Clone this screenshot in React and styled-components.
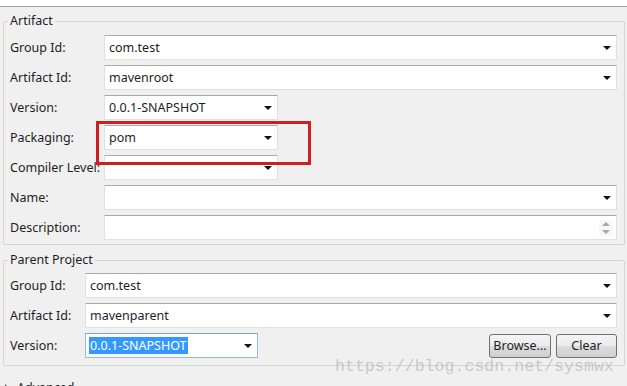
import React from 'react'
import styled, { createGlobalStyle } from 'styled-components'

const GlobalStyle = createGlobalStyle`
  html, body {
    margin: 0;
    padding: 0;
    background: #f0f0f0;
    overflow: hidden;
  }
  body {
    font-family: "Noto Sans", "Liberation Sans", sans-serif;
    font-size: 12.5px;
    color: #1e1e1e;
  }
`

const Page = styled.div`
  position: relative;
  width: 627px;
  height: 386px;
  overflow: hidden;
`

const TopStrip = styled.div`
  height: 6px;
  background: #fff;
  border-bottom: 1px solid #a0a0a0;
`

const Body = styled.div`
  padding: 7px 2px 0 3px;
  display: flex;
  flex-direction: column;
  gap: 8px;
`

const Group = styled.fieldset`
  margin: 0;
  padding: ${p => p.$top}px 7px ${p => p.$bottom}px 6px;
  border: 1px solid #d5d5d5;
  border-radius: 2px;
  min-width: 0;
  display: flex;
  flex-direction: column;
  gap: ${p => p.$gap}px;
`

const Legend = styled.legend`
  padding: 0 2px;
  margin-left: -2px;
  line-height: 14px;
  color: #1e1e1e;
`

const Row = styled.div`
  display: grid;
  grid-template-columns: ${p => p.$label}px 1fr;
  align-items: center;
  height: 25px;
`

const Label = styled.span`
  white-space: nowrap;
  line-height: 25px;
`

const FieldLine = styled.div`
  display: flex;
  align-items: center;
  gap: 5px;
  min-width: 0;
`

const Box = styled.div`
  position: relative;
  box-sizing: border-box;
  height: 25px;
  width: ${p => (p.$width ? `${p.$width}px` : '100%')};
  background: #fff;
  border: 1px solid ${p => (p.$focus ? '#8fbce9' : '#e1e1e1')};
  border-top-color: ${p => (p.$focus ? '#6fa8e0' : '#a9a9a9')};
  display: flex;
  align-items: center;
  padding: 0 3px;
  white-space: nowrap;
`

const Value = styled.span`
  line-height: 17px;
  padding: 0 1px;
  background: ${p => (p.$selected ? '#3399ff' : 'transparent')};
  color: ${p => (p.$selected ? '#fff' : '#1e1e1e')};
`

const Arrow = styled.span`
  margin-left: auto;
  margin-right: 2px;
  width: 0;
  height: 0;
  border-left: 4px solid transparent;
  border-right: 4px solid transparent;
  border-top: 4px solid #111;
`

const Spinner = styled.div`
  margin-left: auto;
  display: flex;
  flex-direction: column;
  gap: 4px;
  padding: 2px 3px;
  background: #f7f7f7;
  border-radius: 2px;
`

const SpinArrow = styled.span`
  width: 0;
  height: 0;
  border-left: 4px solid transparent;
  border-right: 4px solid transparent;
  ${p => (p.$up ? 'border-bottom: 4px solid #a8a8a8;' : 'border-top: 4px solid #a8a8a8;')}
`

const Spacer = styled.div`
  flex: 1;
`

const Button = styled.button`
  box-sizing: border-box;
  height: 24px;
  width: ${p => p.$width}px;
  padding: 0;
  font: inherit;
  color: #1e1e1e;
  border: 1px solid #707070;
  border-radius: 3px;
  background: linear-gradient(#f4f4f4, #ebebeb 50%, #dddddd 51%, #cfcfcf);
`

const Highlight = styled.div`
  position: absolute;
  left: 96px;
  top: 121px;
  width: 215px;
  height: 44px;
  box-sizing: border-box;
  border: 3px solid #cc1f1f;
  pointer-events: none;
`

const Watermark = styled.div`
  position: absolute;
  left: 335px;
  top: 357px;
  line-height: 20px;
  font-family: "Liberation Mono", "DejaVu Sans Mono", monospace;
  font-size: 16.6px;
  color: rgba(175, 175, 175, 0.6);
  pointer-events: none;
`

const Advanced = styled.div`
  display: flex;
  align-items: center;
  gap: 8px;
  padding: 6px 0 0 2px;
  line-height: 16px;
`

const Twisty = styled.span`
  width: 0;
  height: 0;
  border-top: 4px solid transparent;
  border-bottom: 4px solid transparent;
  border-left: 4px solid #555;
`

const Combo = ({ value, width, focus, selected }) => (
  <Box $width={width} $focus={focus}>
    <Value $selected={selected}>{value}</Value>
    <Arrow />
  </Box>
)

const artifactRows = [
  { label: 'Group Id:', value: 'com.test', kind: 'combo' },
  { label: 'Artifact Id:', value: 'mavenroot', kind: 'combo' },
  { label: 'Version:', value: '0.0.1-SNAPSHOT', kind: 'combo', width: 174 },
  { label: 'Packaging:', value: 'pom', kind: 'combo', width: 174 },
  { label: 'Compiler Level:', value: '', kind: 'combo', width: 174 },
  { label: 'Name:', value: '', kind: 'combo' },
  { label: 'Description:', value: '', kind: 'spin' },
]

export default function App() {
  return (
    <Page>
      <GlobalStyle />
      <TopStrip />
      <Body>
        <Group $top={7} $bottom={4} $gap={5}>
          <Legend>Artifact</Legend>
          {artifactRows.map(r => (
            <Row key={r.label} $label={94}>
              <Label>{r.label}</Label>
              {r.kind === 'spin' ? (
                <Box>
                  <Spinner>
                    <SpinArrow $up />
                    <SpinArrow />
                  </Spinner>
                </Box>
              ) : (
                <Combo value={r.value} width={r.width} />
              )}
            </Row>
          ))}
        </Group>
        <Group $top={6} $bottom={7} $gap={5}>
          <Legend>Parent Project</Legend>
          <Row $label={75}>
            <Label>Group Id:</Label>
            <Combo value="com.test" />
          </Row>
          <Row $label={75}>
            <Label>Artifact Id:</Label>
            <Combo value="mavenparent" />
          </Row>
          <Row $label={75}>
            <Label>Version:</Label>
            <FieldLine>
              <Combo value="0.0.1-SNAPSHOT" width={173} focus selected />
              <Spacer />
              <Button $width={62}>Browse...</Button>
              <Button $width={61}>Clear</Button>
            </FieldLine>
          </Row>
        </Group>
        <Advanced>
          <Twisty />
          <span>Advanced</span>
        </Advanced>
      </Body>
      <Highlight />
      <Watermark>https://blog.csdn.net/sysmwx</Watermark>
    </Page>
  )
}
